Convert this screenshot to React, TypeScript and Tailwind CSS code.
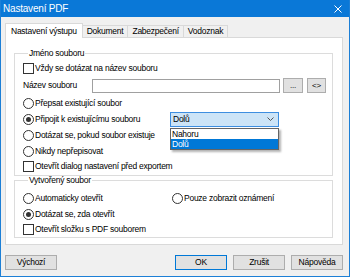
import React from "react";

const Radio = ({ checked }: { checked?: boolean }) => (
  <span className="w-[11px] h-[11px] rounded-full border border-[#333] bg-white flex items-center justify-center shrink-0">
    {checked && <span className="w-[5px] h-[5px] rounded-full bg-[#333]" />}
  </span>
);

const Check = () => (
  <span className="w-[11px] h-[11px] border border-[#333] bg-white shrink-0" />
);

const RadioRow = ({
  label,
  checked,
  className = "h-[16px]",
}: {
  label: string;
  checked?: boolean;
  className?: string;
}) => (
  <div className={`flex items-center gap-[1px] ${className}`}>
    <Radio checked={checked} />
    <span>{label}</span>
  </div>
);

const CheckRow = ({ label, className = "h-[16px]" }: { label: string; className?: string }) => (
  <div className={`flex items-center gap-[1px] ${className}`}>
    <Check />
    <span>{label}</span>
  </div>
);

const Btn = ({ children, focused }: { children: React.ReactNode; focused?: boolean }) => (
  <button
    className={`w-[52px] h-[15px] flex items-center justify-center bg-[#e1e1e1] border ${
      focused ? "border-[#0078d7]" : "border-[#adadad]"
    }`}
  >
    {children}
  </button>
);

export default function App() {
  return (
    <div
      className="w-[350px] h-[277px] bg-[#f0f0f0] border-x border-b border-[#1c7fd6] flex flex-col text-[8.5px] leading-[11px] tracking-[-0.25px] text-black"
      style={{ fontFamily: '"Liberation Sans", Arial, sans-serif' }}
    >
      {/* title bar */}
      <div className="h-[17px] bg-[#0a78d7] flex items-center justify-between pl-[2px] pr-[7px] text-white text-[10px] tracking-[-0.2px]">
        <span>Nastavení PDF</span>
        <svg width="8" height="8" viewBox="0 0 8 8" stroke="white" strokeWidth="1">
          <path d="M0.5 0.5 L7.5 7.5 M7.5 0.5 L0.5 7.5" />
        </svg>
      </div>

      <div className="flex flex-col pl-[4px] pr-[6px]">
        {/* tabs */}
        <div className="flex items-end mt-[6px] h-[14px]">
          <div className="relative z-10 -mb-px h-[15px] px-[5px] flex items-center bg-white border-x border-t border-[#d9d9d9]">
            Nastavení výstupu
          </div>
          <div className="h-[12px] px-[4px] flex items-center border-t border-r border-[#d9d9d9]">Dokument</div>
          <div className="h-[12px] px-[4px] flex items-center border-t border-r border-[#d9d9d9]">Zabezpečení</div>
          <div className="h-[12px] px-[4px] flex items-center border-t border-r border-[#d9d9d9]">Vodoznak</div>
        </div>

        {/* tab panel */}
        <div className="h-[208px] bg-white border border-[#d9d9d9] pl-[8px] pr-[9px] pt-[10px]">
          <fieldset className="border border-[#dcdcdc] pl-[8px] pb-[1px]">
            <legend className="ml-[5px] px-[1px] h-[11px]">Jméno souboru</legend>
            <CheckRow label="Vždy se dotázat na název souboru" className="h-[16px] mt-[1px]" />
            <div className="flex items-center h-[19px]">
              <span className="w-[69px]">Název souboru</span>
              <div className="w-[188px] h-[14px] border border-[#a0a0a0] bg-white" />
              <div className="ml-[3px] w-[20px] h-[15px] bg-[#e1e1e1] border border-[#adadad] flex items-center justify-center text-[8px]">
                ...
              </div>
              <div className="ml-[4px] w-[19px] h-[15px] bg-[#e1e1e1] border border-[#adadad] flex items-center justify-center text-[8px]">
                &lt;&gt;
              </div>
            </div>
            <RadioRow label="Přepsat existující soubor" />
            <div className="flex items-center h-[16px]">
              <div className="flex items-center gap-[1px] w-[147px]">
                <Radio checked />
                <span>Připojit k existujícímu souboru</span>
              </div>
              <div className="relative">
                <div className="w-[109px] h-[15px] bg-[#cce4f7] border border-[#3d8ee0] flex items-center justify-between pl-[2px] pr-[4px]">
                  <span>Dolů</span>
                  <svg width="7" height="4" viewBox="0 0 7 4" fill="none" stroke="#555" strokeWidth="1">
                    <path d="M0.5 0.5 L3.5 3.5 L6.5 0.5" />
                  </svg>
                </div>
                <div className="absolute left-0 top-[16px] w-[109px] bg-white border border-[#646464] shadow-[2px_2px_2px_rgba(0,0,0,0.3)] z-20">
                  <div className="h-[10px] leading-[10px] pl-[1px]">Nahoru</div>
                  <div className="h-[10px] leading-[10px] pl-[1px] bg-[#0078d7] text-white">Dolů</div>
                </div>
              </div>
            </div>
            <RadioRow label="Dotázat se, pokud soubor existuje" />
            <RadioRow label="Nikdy nepřepisovat" />
            <CheckRow label="Otevřít dialog nastavení před exportem" className="h-[15px]" />
          </fieldset>

          <fieldset className="border border-[#dcdcdc] pl-[8px] -mt-[1px]">
            <legend className="ml-[5px] px-[1px] h-[11px]">Vytvořený soubor</legend>
            <div className="flex items-center h-[16px] mt-[4px]">
              <div className="w-[149px]">
                <RadioRow label="Automaticky otevřít" />
              </div>
              <RadioRow label="Pouze zobrazit oznámení" />
            </div>
            <RadioRow label="Dotázat se, zda otevřít" checked />
            <CheckRow label="Otevřít složku s PDF souborem" className="h-[15px]" />
          </fieldset>
        </div>

        {/* buttons */}
        <div className="flex items-center mt-[10px]">
          <Btn>Výchozí</Btn>
          <div className="flex-1" />
          <div className="flex gap-[6px]">
            <Btn focused>OK</Btn>
            <Btn>Zrušit</Btn>
            <Btn>Nápověda</Btn>
          </div>
        </div>
      </div>
    </div>
  );
}
